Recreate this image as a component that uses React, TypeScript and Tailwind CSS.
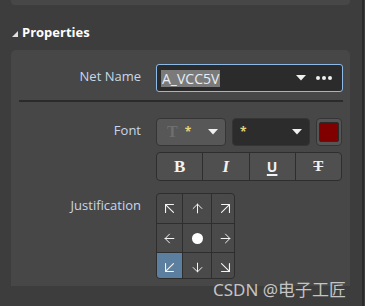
import { ArrowDown, ArrowDownLeft, ArrowDownRight, ArrowLeft, ArrowRight, ArrowUp, ArrowUpLeft, ArrowUpRight } from "lucide-react";

const FONT = { fontFamily: '"Open Sans", "Noto Sans", sans-serif' };

function Caret() {
  return (
    <svg width="10" height="6" viewBox="0 0 10 6" className="shrink-0">
      <polygon points="0,0 10,0 5,5.5" fill="#f0f0f0" />
    </svg>
  );
}

function Label({ children }: { children: string }) {
  return (
    <div className="w-[130px] shrink-0 pt-[3px] text-right text-[13px] leading-[18px] text-[#c7d7e8]">
      {children}
    </div>
  );
}

const cells = [
  { icon: <ArrowUpLeft size={19} strokeWidth={1.4} /> },
  { icon: <ArrowUp size={15} strokeWidth={1.6} /> },
  { icon: <ArrowUpRight size={19} strokeWidth={1.4} /> },
  { icon: <ArrowLeft size={15} strokeWidth={1.6} /> },
  { icon: <span className="block h-[11px] w-[11px] rounded-full bg-white" /> },
  { icon: <ArrowRight size={15} strokeWidth={1.6} /> },
  { icon: <ArrowDownLeft size={19} strokeWidth={1.4} />, active: true },
  { icon: <ArrowDown size={15} strokeWidth={1.6} /> },
  { icon: <ArrowDownRight size={19} strokeWidth={1.4} /> },
];

export default function App() {
  return (
    <div className="relative flex h-[306px] w-[365px] overflow-hidden bg-[#3d3d3d]" style={FONT}>
      <div className="w-[362px]">
        <div className="ml-[11px] h-[5px] w-[339px] rounded-b-[4px] bg-[#474747]" />

        <div className="flex h-[45px] items-center pl-[12px] pt-[11px]">
          <svg width="6" height="6" viewBox="0 0 6 6" className="mr-[4px] mt-[2px]">
            <polygon points="0,6 6,6 6,0" fill="#e0e0e0" />
          </svg>
          <span className="text-[13px] font-bold text-white">Properties</span>
        </div>

        <div className="ml-[11px] w-[339px] rounded-t-[5px] bg-[#474747] pb-[7px] pt-[14px]">
          <div className="flex items-start gap-[15px]">
            <Label>Net Name</Label>
            <div className="flex h-[28px] w-[187px] items-center rounded-[3px] border border-[#8db9e6] bg-[#2b2b2b] pl-[4px] pr-[10px]">
              <span className="bg-[#7a7a7a] px-[1px] text-[14px] leading-[17px] text-[#e6eef6]">A_VCC5V</span>
              <div className="flex-1" />
              <Caret />
              <span className="ml-[10px] flex gap-[2px]">
                <span className="h-[4px] w-[4px] rounded-full bg-[#f0f0f0]" />
                <span className="h-[4px] w-[4px] rounded-full bg-[#f0f0f0]" />
                <span className="h-[4px] w-[4px] rounded-full bg-[#f0f0f0]" />
              </span>
            </div>
          </div>

          <div className="ml-[8px] mt-[8px] h-[2px] w-[324px] bg-[#2b2b2b]" />

          <div className="mt-[16px] flex items-start gap-[15px]">
            <Label>Font</Label>
            <div className="flex w-[186px] flex-col gap-[6px]">
              <div className="flex gap-[6px]">
                <div className="flex h-[28px] w-[70px] items-center rounded-[4px] border border-[#353535] bg-[#575757] pl-[10px] pr-[7px]">
                  <span className="text-[16px] font-bold leading-none text-[#6e6e6e]" style={{ fontFamily: '"Liberation Serif", serif' }}>
                    T
                  </span>
                  <span className="ml-[7px] text-[12px] font-bold leading-none text-[#e2d27a]">*</span>
                  <div className="flex-1" />
                  <Caret />
                </div>
                <div className="flex h-[28px] w-[78px] items-center rounded-[4px] border border-[#353535] bg-[#2c2c2c] pl-[7px] pr-[7px]">
                  <span className="text-[12px] font-bold leading-none text-[#e2d27a]">*</span>
                  <div className="flex-1" />
                  <Caret />
                </div>
                <div className="flex h-[28px] w-[26px] items-center justify-center rounded-[4px] border border-[#353535] bg-[#555555]">
                  <div className="h-[20px] w-[20px] rounded-[2px] border border-[#2a2a2a] bg-[#800000]" />
                </div>
              </div>
              <div className="flex h-[29px] overflow-hidden rounded-[4px] border border-[#2e2e2e] bg-[#4f4f4f] text-[#f2f2f2]">
                <div className="flex flex-1 items-center justify-center border-r border-[#2e2e2e] text-[17px] font-bold" style={{ fontFamily: '"Liberation Serif", serif' }}>
                  B
                </div>
                <div className="flex flex-1 items-center justify-center border-r border-[#2e2e2e] text-[17px] font-bold italic" style={{ fontFamily: '"Liberation Serif", serif' }}>
                  I
                </div>
                <div className="flex flex-1 items-center justify-center border-r border-[#2e2e2e] text-[14px] font-bold underline decoration-2 underline-offset-2">
                  U
                </div>
                <div className="flex flex-1 items-center justify-center text-[15px] font-bold line-through" style={{ fontFamily: '"Liberation Serif", serif' }}>
                  T
                </div>
              </div>
            </div>
          </div>

          <div className="mt-[12px] flex items-start gap-[15px]">
            <Label>Justification</Label>
            <div className="grid h-[86px] w-[79px] grid-cols-[25px_28px_26px] grid-rows-[29px_28px_29px] gap-[1px] overflow-hidden rounded-[4px] border border-[#2e2e2e] bg-[#2e2e2e]">
              {cells.map((c, i) => (
                <div
                  key={i}
                  className={`flex items-center justify-center text-[#f4f4f4] ${c.active ? "bg-[#5c7fa0]" : "bg-[#4a4a4a]"}`}
                >
                  {c.icon}
                </div>
              ))}
            </div>
          </div>
        </div>
      </div>
      <div className="w-[2px] bg-[#2a2a2a]" />
      <div className="flex-1" />

      <div
        className="absolute left-[213px] top-[277px] text-[17px] text-[#c4c4c4]"
        style={{ fontFamily: '"Noto Sans", "Noto Sans CJK SC", sans-serif' }}
      >
        CSDN @电子工匠
      </div>
    </div>
  );
}
